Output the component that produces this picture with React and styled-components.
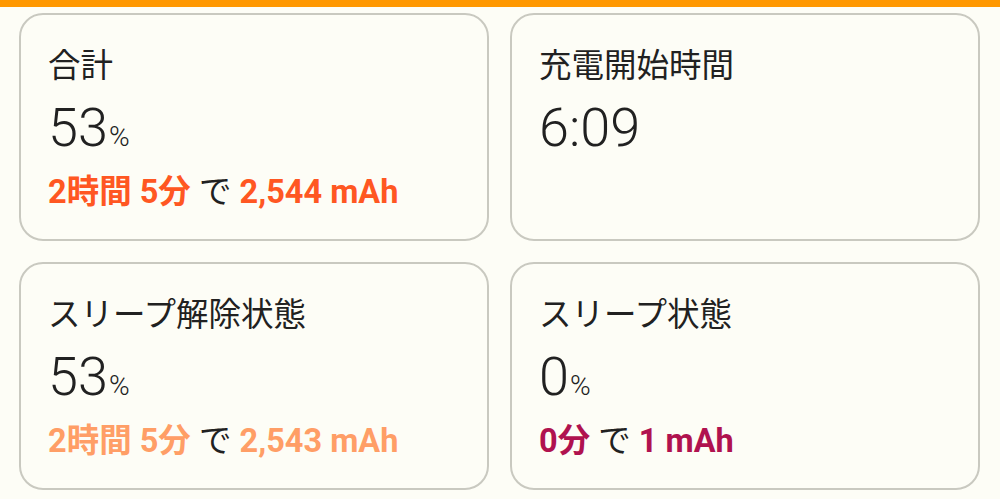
import React from "react";
import styled, { createGlobalStyle } from "styled-components";

const GlobalStyle = createGlobalStyle`
  html, body {
    margin: 0;
    background: #fdfdf6;
  }
  body {
    font-family: Roboto, "Noto Sans CJK JP", sans-serif;
    color: #212121;
  }
`;

const TopBar = styled.div`
  height: 7px;
  background: #ff9800;
`;

const Grid = styled.div`
  display: grid;
  grid-template-columns: 1fr 1fr;
  gap: 21px;
  padding: 6px 20px 0 19px;
`;

const Card = styled.div`
  box-sizing: border-box;
  height: 228px;
  border: 2px solid #c9c9c0;
  border-radius: 24px;
  background: #fdfdf6;
  padding: 31px 27px 0;
  display: flex;
  flex-direction: column;
`;

const Title = styled.div`
  font-size: 32.5px;
  line-height: 40px;
  font-weight: 400;
  white-space: nowrap;
`;

const Value = styled.div`
  margin-top: 14px;
  font-size: 54px;
  line-height: 56px;
  font-weight: 300;
  span {
    font-size: 28px;
    margin-left: 1px;
  }
`;

const Sub = styled.div`
  margin-top: 9px;
  font-size: 32.5px;
  line-height: 36px;
  font-weight: 700;
  white-space: nowrap;
  color: ${(p) => p.color};
  em {
    font-style: normal;
    font-weight: 400;
    color: #212121;
  }
`;

const cards = [
  { title: "合計", value: "53", unit: "%", time: "2時間 5分", amount: "2,544 mAh", color: "#ff5722" },
  { title: "充電開始時間", value: "6:09" },
  { title: "スリープ解除状態", value: "53", unit: "%", time: "2時間 5分", amount: "2,543 mAh", color: "#ff9e66" },
  { title: "スリープ状態", value: "0", unit: "%", time: "0分", amount: "1 mAh", color: "#b0124f" },
];

export default function App() {
  return (
    <>
      <GlobalStyle />
      <TopBar />
      <Grid>
        {cards.map((c) => (
          <Card key={c.title}>
            <Title>{c.title}</Title>
            <Value>
              {c.value}
              {c.unit && <span>{c.unit}</span>}
            </Value>
            {c.time && (
              <Sub color={c.color}>
                {c.time} <em>で</em> {c.amount}
              </Sub>
            )}
          </Card>
        ))}
      </Grid>
    </>
  );
}
